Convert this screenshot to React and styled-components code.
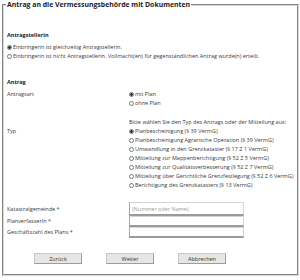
import styled, { createGlobalStyle } from "styled-components";

const Global = createGlobalStyle`
  html, body {
    margin: 0;
    padding: 0;
    background: #fff;
  }
  body {
    font-family: "Open Sans", "Liberation Sans", sans-serif;
    color: #3a3a3a;
  }
`;

const Frame = styled.fieldset`
  box-sizing: border-box;
  width: 295px;
  height: 276px;
  margin: 0 0 0 2px;
  padding: 0 4px 0 3px;
  border: 2px groove #d8d8d8;
  display: flex;
  flex-direction: column;
`;

const Legend = styled.legend`
  padding: 0 1px;
  margin-left: -1px;
  font-size: 6.9px;
  line-height: 10px;
  font-weight: 700;
  color: #222;
`;

const Section = styled.div`
  display: flex;
  flex-direction: column;
  padding-top: ${(p) => p.top || 0}px;
`;

const Heading = styled.div`
  font-size: 5.5px;
  line-height: 9px;
  font-weight: 700;
  color: #222;
  margin-bottom: 3px;
`;

const Grid = styled.div`
  display: grid;
  grid-template-columns: 122px 1fr;
  align-items: start;
`;

const Label = styled.div`
  font-size: 5.5px;
  line-height: 9px;
  grid-column: 1;
`;

const Value = styled.div`
  grid-column: 2;
  display: flex;
  flex-direction: column;
`;

const Hint = styled.div`
  font-size: 5.5px;
  line-height: 9px;
  grid-column: 2;
`;

const Option = styled.label`
  display: flex;
  align-items: center;
  gap: 1px;
  font-size: 5.5px;
  line-height: 9px;
  white-space: nowrap;
`;

const Radio = styled.span`
  box-sizing: border-box;
  width: 5px;
  height: 5px;
  border-radius: 50%;
  border: 0.7px solid #777;
  background: ${(p) =>
    p.checked ? "radial-gradient(circle, #333 0 1.3px, #fff 1.5px)" : "#fff"};
  flex: none;
`;

const Spacer = styled.div`
  grid-column: 1 / span 2;
  height: ${(p) => p.h}px;
`;

const FieldLabel = styled(Label)`
  line-height: ${(p) => p.h}px;
`;

const Input = styled.input`
  box-sizing: border-box;
  width: 115px;
  height: ${(p) => p.h}px;
  margin: 0;
  padding: 0 2px;
  border: 1px solid #d4d4d4;
  border-bottom: 2px solid #9a9a9a;
  border-left-color: #a8a8a8;
  font-family: inherit;
  font-size: 5.5px;
  color: #333;
  background: #fff;
  &::placeholder {
    color: #9a9a9a;
  }
`;

const Buttons = styled.div`
  display: flex;
  gap: 24px;
  padding: 15px 0 0 27px;
`;

const Button = styled.button`
  box-sizing: border-box;
  width: 48px;
  height: 11px;
  padding: 0;
  border: 1px solid #c8c8c8;
  border-right-color: #9c9c9c;
  border-bottom-color: #9c9c9c;
  background: #e6e6e6;
  font-family: inherit;
  font-size: 5.5px;
  color: #333;
`;

const types = [
  "Planbescheinigung (§ 39 VermG)",
  "Planbescheinigung Agrarische Operation (§ 39 VermG)",
  "Umwandlung in den Grenzkataster (§ 17 Z 1 VermG)",
  "Mitteilung zur Mappenberichtigung (§ 52 Z 5 VermG)",
  "Mitteilung zur Qualitätsverbesserung (§ 52 Z 7 VermG)",
  "Mitteilung über Gerichtliche Grenzfestlegung (§ 52 Z 6 VermG)",
  "Berichtigung des Grenzkatasters (§ 13 VermG)",
];

export default function App() {
  return (
    <>
      <Global />
      <Frame>
        <Legend>Antrag an die Vermessungsbehörde mit Dokumenten</Legend>

        <Section top={21}>
          <Heading>Antragstellerin</Heading>
          <Option>
            <Radio checked />
            Einbringerin ist gleichzeitig Antragstellerin.
          </Option>
          <Option>
            <Radio />
            Einbringerin ist nicht Antragstellerin. Vollmacht(en) für
            gegenständlichen Antrag wurde(n) erteilt.
          </Option>
        </Section>

        <Section top={17}>
          <Heading>Antrag</Heading>
          <Grid>
            <Label>Antragsart</Label>
            <Value>
              <Option>
                <Radio checked />
                mit Plan
              </Option>
              <Option>
                <Radio />
                ohne Plan
              </Option>
            </Value>
            <Spacer h={10} />
            <Hint>Bitte wählen Sie den Typ des Antrags oder der Mitteilung aus:</Hint>
            <Label>Typ</Label>
            <Value>
              {types.map((t, i) => (
                <Option key={t}>
                  <Radio checked={i === 0} />
                  {t}
                </Option>
              ))}
            </Value>
            <Spacer h={12} />
            <FieldLabel h={14}>Katastralgemeinde *</FieldLabel>
            <Value>
              <Input h={14} placeholder="(Nummer oder Name)" />
            </Value>
            <FieldLabel h={11}>PlanverfasserIn *</FieldLabel>
            <Value>
              <Input h={11} />
            </Value>
            <FieldLabel h={11}>Geschäftszahl des Plans *</FieldLabel>
            <Value>
              <Input h={11} />
            </Value>
          </Grid>
        </Section>

        <Buttons>
          <Button>Zurück</Button>
          <Button>Weiter</Button>
          <Button>Abbrechen</Button>
        </Buttons>
      </Frame>
    </>
  );
}
